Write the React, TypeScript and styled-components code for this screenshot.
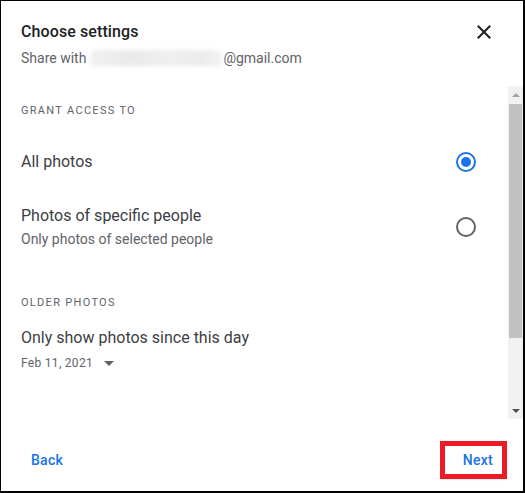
import React from "react";
import styled, { createGlobalStyle } from "styled-components";

const Global = createGlobalStyle`
  html, body { margin: 0; padding: 0; background: #fff; }
  body { font-family: Roboto, "Liberation Sans", Arial, sans-serif; }
  * { box-sizing: border-box; }
`;

const Frame = styled.div`
  width: 525px;
  height: 493px;
  display: flex;
  flex-direction: column;
  background: #fff;
  border-style: solid;
  border-color: #000;
  border-width: 1px 2px 2px 1px;
`;

const Header = styled.div`
  padding: 19px 0 0 20px;
  height: 85px;
`;

const TitleRow = styled.div`
  display: flex;
  align-items: center;
  justify-content: space-between;
  height: 24px;
  padding-right: 27px;
`;

const Title = styled.h1`
  margin: 0;
  font-size: 16px;
  line-height: 24px;
  font-weight: 500;
  color: #202124;
  letter-spacing: 0.1px;
`;

const CloseButton = styled.button`
  border: 0;
  padding: 0;
  background: none;
  width: 24px;
  height: 24px;
  display: flex;
  color: #202124;
`;

const Subtitle = styled.div`
  margin-top: 4px;
  font-size: 14px;
  line-height: 20px;
  color: #5f6368;
  display: flex;
  align-items: center;
`;

const Blurred = styled.span`
  display: inline-block;
  width: 131px;
  height: 16px;
  margin: 0 1px 0 5px;
  background: linear-gradient(90deg, #f1f1f1, #e9e9e9 30%, #efefef 60%, #ebebeb 85%, #f4f4f4);
  filter: blur(2px);
`;

const Body = styled.div`
  display: flex;
  height: 333px;
`;

const Content = styled.div`
  flex: 1;
  padding: 17px 32px 0 20px;
`;

const SectionLabel = styled.div<{ $top: number }>`
  margin-top: ${(p) => p.$top}px;
  font-size: 11px;
  line-height: 16px;
  letter-spacing: 1.3px;
  text-transform: uppercase;
  color: #5f6368;
`;

const OptionRow = styled.div<{ $top: number }>`
  margin-top: ${(p) => p.$top}px;
  display: flex;
  align-items: center;
  justify-content: space-between;
`;

const OptionText = styled.div`
  display: flex;
  flex-direction: column;
`;

const OptionTitle = styled.div`
  font-size: 16px;
  line-height: 24px;
  color: #3c4043;
`;

const OptionSub = styled.div`
  margin-top: 1px;
  font-size: 14px;
  line-height: 20px;
  color: #5f6368;
`;

const Radio = styled.span<{ $checked?: boolean }>`
  width: 20px;
  height: 20px;
  border-radius: 50%;
  border: 2px solid ${(p) => (p.$checked ? "#1a73e8" : "#5f6368")};
  display: flex;
  align-items: center;
  justify-content: center;
  &::after {
    content: "";
    width: 10px;
    height: 10px;
    border-radius: 50%;
    background: ${(p) => (p.$checked ? "#1a73e8" : "transparent")};
  }
`;

const DateRow = styled.div`
  margin-top: 5px;
  display: flex;
  align-items: center;
  gap: 11px;
  font-size: 12px;
  line-height: 16px;
  letter-spacing: 0.3px;
  color: #5f6368;
`;

const Caret = styled.span`
  width: 0;
  height: 0;
  border-left: 5px solid transparent;
  border-right: 5px solid transparent;
  border-top: 5px solid #5f6368;
`;

const Scrollbar = styled.div`
  width: 15px;
  background: #f1f1f1;
  display: flex;
  flex-direction: column;
  align-items: center;
`;

const ArrowBtn = styled.div<{ $down?: boolean }>`
  height: 17px;
  width: 15px;
  display: flex;
  align-items: center;
  justify-content: center;
  &::after {
    content: "";
    border-left: 4px solid transparent;
    border-right: 4px solid transparent;
    ${(p) =>
      p.$down
        ? "border-top: 4px solid #505050;"
        : "border-bottom: 4px solid #a3a3a3;"}
  }
`;

const Thumb = styled.div`
  width: 13px;
  height: 234px;
  margin-top: 1px;
  background: #c1c1c1;
`;

const Track = styled.div`
  flex: 1;
`;

const Footer = styled.div`
  flex: 1;
  display: flex;
  align-items: center;
  justify-content: space-between;
  padding: 9px 16px 0 22px;
`;

const TextButton = styled.button`
  border: 0;
  background: none;
  padding: 0 8px;
  height: 28px;
  font-family: inherit;
  font-size: 14px;
  font-weight: 500;
  letter-spacing: 0.25px;
  color: #1a73e8;
`;

const Highlight = styled.div`
  border: 5px solid #ed1c24;
  width: 67px;
  height: 38px;
  display: flex;
  align-items: center;
  justify-content: flex-end;
  box-shadow: 0 2px 1px -1px rgba(0,0,0,0.08);
  ${TextButton} {
    padding: 0 9px 0 0;
  }
`;

export default function App() {
  return (
    <>
      <Global />
      <Frame>
        <Header>
          <TitleRow>
            <Title>Choose settings</Title>
            <CloseButton aria-label="Close">
              <svg width="24" height="24" viewBox="0 0 24 24" fill="currentColor">
                <path d="M19 6.41L17.59 5 12 10.59 6.41 5 5 6.41 10.59 12 5 17.59 6.41 19 12 13.41 17.59 19 19 17.59 13.41 12z" />
              </svg>
            </CloseButton>
          </TitleRow>
          <Subtitle>
            Share with
            <Blurred />
            @gmail.com
          </Subtitle>
        </Header>
        <Body>
          <Content>
            <SectionLabel $top={0}>Grant access to</SectionLabel>
            <OptionRow $top={31}>
              <OptionTitle>All photos</OptionTitle>
              <Radio $checked />
            </OptionRow>
            <OptionRow $top={30}>
              <OptionText>
                <OptionTitle>Photos of specific people</OptionTitle>
                <OptionSub>Only photos of selected people</OptionSub>
              </OptionText>
              <Radio />
            </OptionRow>
            <SectionLabel $top={46}>Older photos</SectionLabel>
            <OptionRow $top={15}>
              <OptionTitle>Only show photos since this day</OptionTitle>
            </OptionRow>
            <DateRow>
              Feb 11, 2021
              <Caret />
            </DateRow>
          </Content>
          <Scrollbar>
            <ArrowBtn />
            <Thumb />
            <Track />
            <ArrowBtn $down />
          </Scrollbar>
        </Body>
        <Footer>
          <TextButton>Back</TextButton>
          <Highlight>
            <TextButton>Next</TextButton>
          </Highlight>
        </Footer>
      </Frame>
    </>
  );
}
